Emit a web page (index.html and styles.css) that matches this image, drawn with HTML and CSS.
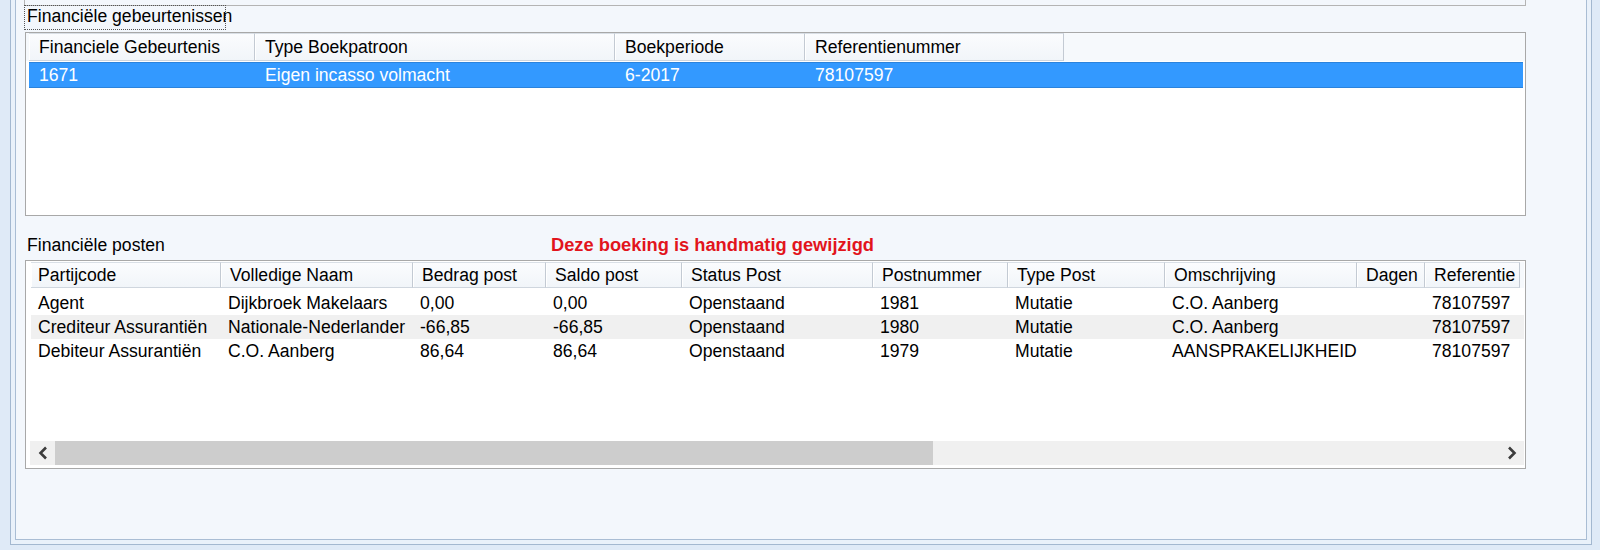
FILE: index.html
```html
<!DOCTYPE html>
<html lang="nl">
<head>
<meta charset="utf-8">
<title>Financiële gebeurtenissen</title>
<link rel="stylesheet" href="styles.css">
</head>
<body>
<div class="outer">
  <div class="inner">
    <div class="prevbox"></div>
    <div class="grouplabel">Financiële gebeurtenissen</div>

    <div class="grid grid1">
      <div class="row hrow">
        <div class="hcell">Financiele Gebeurtenis</div>
        <div class="hcell">Type Boekpatroon</div>
        <div class="hcell">Boekperiode</div>
        <div class="hcell">Referentienummer</div>
      </div>
      <div class="row drow selected">
        <div class="dcell">1671</div>
        <div class="dcell">Eigen incasso volmacht</div>
        <div class="dcell">6-2017</div>
        <div class="dcell">78107597</div>
      </div>
    </div>

    <div class="postbar">
      <div class="postlabel">Financiële posten</div>
      <div class="warning">Deze boeking is handmatig gewijzigd</div>
    </div>

    <div class="grid grid2">
      <div class="row hrow">
        <div class="hcell">Partijcode</div>
        <div class="hcell">Volledige Naam</div>
        <div class="hcell">Bedrag post</div>
        <div class="hcell">Saldo post</div>
        <div class="hcell">Status Post</div>
        <div class="hcell">Postnummer</div>
        <div class="hcell">Type Post</div>
        <div class="hcell">Omschrijving</div>
        <div class="hcell">Dagen</div>
        <div class="hcell">Referentie</div>
      </div>
      <div class="row drow">
        <div class="dcell">Agent</div>
        <div class="dcell">Dijkbroek Makelaars</div>
        <div class="dcell">0,00</div>
        <div class="dcell">0,00</div>
        <div class="dcell">Openstaand</div>
        <div class="dcell">1981</div>
        <div class="dcell">Mutatie</div>
        <div class="dcell">C.O. Aanberg</div>
        <div class="dcell"></div>
        <div class="dcell">78107597</div>
      </div>
      <div class="row drow alt">
        <div class="dcell">Crediteur Assurantiën</div>
        <div class="dcell">Nationale-Nederlander</div>
        <div class="dcell">-66,85</div>
        <div class="dcell">-66,85</div>
        <div class="dcell">Openstaand</div>
        <div class="dcell">1980</div>
        <div class="dcell">Mutatie</div>
        <div class="dcell">C.O. Aanberg</div>
        <div class="dcell"></div>
        <div class="dcell">78107597</div>
      </div>
      <div class="row drow">
        <div class="dcell">Debiteur Assurantiën</div>
        <div class="dcell">C.O. Aanberg</div>
        <div class="dcell">86,64</div>
        <div class="dcell">86,64</div>
        <div class="dcell">Openstaand</div>
        <div class="dcell">1979</div>
        <div class="dcell">Mutatie</div>
        <div class="dcell">AANSPRAKELIJKHEID</div>
        <div class="dcell"></div>
        <div class="dcell">78107597</div>
      </div>

      <div class="hscroll">
        <div class="sb-btn">
          <svg width="12" height="14" viewBox="0 0 12 14"><polyline points="9,1.5 3.5,7 9,12.5" fill="none" stroke="#3c3c3c" stroke-width="2.6"/></svg>
        </div>
        <div class="sb-thumb"></div>
        <div class="sb-track"></div>
        <div class="sb-btn">
          <svg width="12" height="14" viewBox="0 0 12 14"><polyline points="3,1.5 8.5,7 3,12.5" fill="none" stroke="#3c3c3c" stroke-width="2.6"/></svg>
        </div>
      </div>
    </div>
  </div>
</div>
</body>
</html>
```

FILE: styles.css
```css
html, body {
  margin: 0;
  padding: 0;
}
body {
  width: 1600px;
  height: 550px;
  overflow: hidden;
  background: #dfeaf7;
  font-family: "Liberation Sans", Arial, sans-serif;
  font-size: 17.6px;
  color: #000;
}
.outer {
  box-sizing: border-box;
  margin-left: 10px;
  width: 1582px;
  height: 545px;
  border: 1px solid #a3b8d0;
  border-top: 0;
  background: #e9f1fa;
  padding: 0 4px 4px 4px;
}
.inner {
  box-sizing: border-box;
  height: 100%;
  border: 1px solid #a9bdd4;
  border-top: 0;
  background: #f3f7fc;
}
.prevbox {
  box-sizing: border-box;
  margin-left: 8px;
  width: 1502px;
  height: 6px;
  border: 1px solid #b4b4b4;
  border-top: 0;
}
.grouplabel {
  box-sizing: border-box;
  margin-left: 8px;
  margin-top: -1px;
  width: 202px;
  height: 25px;
  border: 1px dotted #555;
  padding-left: 2px;
  line-height: 21px;
  white-space: nowrap;
}
.grid {
  box-sizing: border-box;
  margin-left: 9px;
  width: 1501px;
  border: 1px solid #a8a8a8;
  background: #fff;
  display: flex;
  flex-direction: column;
}
.grid1 {
  margin-top: 2px;
  height: 184px;
  padding: 0 2px 0 3px;
}
.grid2 {
  height: 209px;
  padding: 1px 1px 3px 5px;
}
.row {
  display: grid;
  white-space: nowrap;
}
.grid1 .row {
  grid-template-columns: 226px 360px 190px 259px 1fr;
}
.grid2 .row {
  grid-template-columns: 190px 192px 133px 136px 191px 135px 157px 192px 68px 95px 1fr;
}
.hrow {
  background: #f6f9fc;
}
.grid1 .hrow {
  height: 28px;
  margin-left: -3px;
  margin-right: -2px;
  padding-left: 3px;
  padding-right: 2px;
}
.grid2 .hrow {
  height: 26px;
}
.hcell {
  box-sizing: border-box;
  overflow: hidden;
  border-top: 1px solid #d9dfe6;
  border-bottom: 1px solid #cfd6de;
  border-right: 1px solid #c3cad3;
  box-shadow: inset 1px 0 0 #ffffff;
  background: linear-gradient(#fbfcfe, #f1f5f9);
  padding-left: 9px;
  line-height: 24px;
}
.grid1 .hcell {
  padding-left: 10px;
  line-height: 26px;
}
.grid2 .hcell:first-child {
  padding-left: 7px;
}
.dcell {
  overflow: hidden;
  padding-left: 7px;
}
.grid1 .dcell {
  padding-left: 10px;
}
.drow {
  height: 24px;
  line-height: 24px;
}
.selected {
  box-sizing: border-box;
  margin-top: 1px;
  height: 26px;
  line-height: 24px;
  background: #3399ff;
  border-top: 1px solid #2b83dc;
  border-bottom: 1px solid #2b83dc;
  color: #fff;
}
.grid2 .hrow + .drow {
  margin-top: 3px;
}
.alt {
  background: #f0f0f0;
}
.postbar {
  display: flex;
  height: 44px;
  box-sizing: border-box;
  padding-top: 18px;
  line-height: 22px;
  white-space: nowrap;
}
.postlabel {
  width: 524px;
  margin-left: 11px;
}
.warning {
  color: #e2141c;
  font-weight: bold;
  font-size: 18.3px;
}
.hscroll {
  margin-top: auto;
  margin-left: -1px;
  height: 24px;
  display: flex;
}
.sb-btn {
  width: 25px;
  background: #f0f0f0;
  display: flex;
  align-items: center;
  justify-content: center;
}
.sb-thumb {
  width: 878px;
  background: #cdcdcd;
}
.sb-track {
  flex: 1;
  background: #f0f0f0;
}
```
